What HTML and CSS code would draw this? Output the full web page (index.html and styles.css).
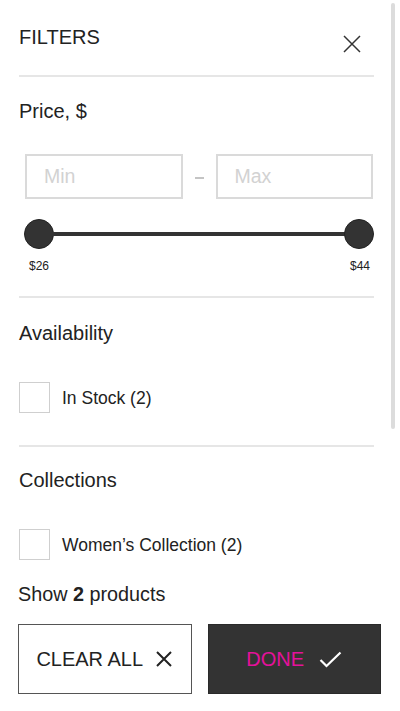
FILE: index.html
```html
<!DOCTYPE html>
<html lang="en">
<head>
<meta charset="utf-8">
<title>Filters</title>
<link rel="stylesheet" href="styles.css">
</head>
<body>
<div class="drawer">
  <div class="scroll-thumb"></div>
  <div class="panel">
    <header class="header">
      <h1 class="title">FILTERS</h1>
      <button class="close" aria-label="Close">
        <svg width="18" height="18" viewBox="0 0 18 18"><path d="M1 1L17 17M17 1L1 17" stroke="#333" stroke-width="1.5" fill="none"/></svg>
      </button>
    </header>
    <div class="divider"></div>

    <section class="section price">
      <h2 class="section-title">Price, $</h2>
      <div class="inputs">
        <input class="field" type="text" placeholder="Min">
        <span class="dash"></span>
        <input class="field" type="text" placeholder="Max">
      </div>
      <div class="slider">
        <span class="thumb"></span>
        <span class="track"></span>
        <span class="thumb"></span>
      </div>
      <div class="range-labels">
        <span>$26</span>
        <span>$44</span>
      </div>
    </section>
    <div class="divider"></div>

    <section class="section avail">
      <h2 class="section-title">Availability</h2>
      <label class="check">
        <span class="box"></span>
        <span class="check-text">In Stock (2)</span>
      </label>
    </section>
    <div class="divider"></div>

    <section class="section last">
      <h2 class="section-title">Collections</h2>
      <label class="check">
        <span class="box"></span>
        <span class="check-text">Women’s Collection (2)</span>
      </label>
    </section>
  </div>

  <footer class="footer">
    <p class="count">Show <b>2</b> products</p>
    <div class="actions">
      <button class="btn btn-clear">
        <span>CLEAR ALL</span>
        <svg width="18" height="18" viewBox="0 0 18 18"><path d="M2 2L16 16M16 2L2 16" stroke="#222" stroke-width="2" fill="none"/></svg>
      </button>
      <button class="btn btn-done">
        <span>DONE</span>
        <svg width="23" height="17" viewBox="0 0 23 17"><path d="M1.5 9L7.5 15L21.5 1.5" stroke="#fff" stroke-width="2.2" fill="none"/></svg>
      </button>
    </div>
  </footer>
</div>
</body>
</html>
```

FILE: styles.css
```css
* { box-sizing: border-box; }

html, body {
  margin: 0;
  padding: 0;
  background: #fff;
}

body {
  font-family: "Liberation Sans", Arial, sans-serif;
  color: #222;
  width: 400px;
  height: 711px;
  overflow: hidden;
}

.drawer {
  position: relative;
  width: 400px;
  height: 711px;
}

.scroll-thumb {
  position: absolute;
  top: 3px;
  left: 391px;
  width: 4px;
  height: 426px;
  border-radius: 2px;
  background: #dcdcdc;
}

.panel {
  padding: 0 26px 0 19px;
}

.header {
  height: 75px;
  display: flex;
  justify-content: space-between;
  align-items: flex-start;
}

.title {
  margin: 0;
  padding-top: 26px;
  font-size: 20px;
  line-height: 22px;
  font-weight: normal;
  color: #222;
}

.close {
  margin: 35px 13px 0 0;
  padding: 0;
  border: 0;
  background: none;
  width: 18px;
  height: 18px;
  display: block;
}

.close svg { display: block; }

.divider {
  height: 2px;
  background: #e6e6e6;
}

.section-title {
  margin: 0;
  font-size: 20px;
  line-height: 24px;
  font-weight: normal;
  color: #222;
}

.price {
  padding-top: 22px;
  padding-bottom: 23px;
}

.inputs {
  margin-top: 31px;
  padding: 0 1px 0 6px;
  display: grid;
  grid-template-columns: 1fr 33px 1fr;
  align-items: center;
}

.field {
  height: 45px;
  width: 100%;
  border: 2px solid #dadada;
  border-radius: 0;
  padding: 0 17px 1px;
  font-family: "Liberation Sans", Arial, sans-serif;
  font-size: 19.5px;
  color: #222;
  background: #fff;
  outline: none;
}

.field::placeholder {
  color: #d2d2d2;
}

.dash {
  justify-self: center;
  width: 9px;
  height: 2px;
  margin-top: 3px;
  background: #c4c4c4;
}

.slider {
  margin-top: 20px;
  padding-left: 5px;
  display: flex;
  align-items: center;
  height: 30px;
}

.thumb {
  flex: none;
  width: 30px;
  height: 30px;
  border-radius: 50%;
  background: #333;
  border: 1px solid #222;
}

.track {
  flex: 1;
  height: 4px;
  margin: 0 -2px;
  background: #333;
}

.range-labels {
  margin-top: 10px;
  padding: 0 4px 0 10px;
  display: flex;
  justify-content: space-between;
  font-size: 12px;
  line-height: 14px;
  color: #222;
}

.avail {
  padding-top: 23px;
  padding-bottom: 32px;
}

.check {
  display: flex;
  align-items: center;
  gap: 12px;
  margin-top: 37px;
}

.box {
  flex: none;
  width: 31px;
  height: 31px;
  border: 1px solid #cfcfcf;
  background: #fff;
}

.check-text {
  font-size: 17.5px;
  line-height: 20px;
  color: #222;
}

.last {
  padding-top: 21px;
}

.footer {
  padding: 23px 19px 0 18px;
}

.count {
  margin: 0;
  font-size: 19.8px;
  line-height: 22px;
  color: #222;
}

.count b { font-weight: bold; }

.actions {
  margin-top: 19px;
  display: grid;
  grid-template-columns: 1fr 1fr;
  gap: 16px;
}

.btn {
  height: 70px;
  display: flex;
  align-items: center;
  justify-content: center;
  font-family: "Liberation Sans", Arial, sans-serif;
  font-size: 20px;
  padding: 0;
  border-radius: 0;
  cursor: pointer;
}

.btn svg { display: block; flex: none; }

.btn-clear {
  gap: 12px;
  background: #fff;
  color: #222;
  border: 1.5px solid #555;
}

.btn-done {
  gap: 15px;
  background: #333;
  color: #e4119b;
  border: 1px solid #2a2a2a;
}
```
